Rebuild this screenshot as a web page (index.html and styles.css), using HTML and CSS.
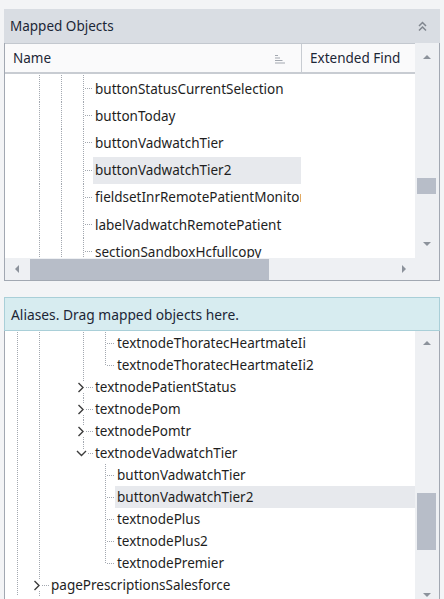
FILE: index.html
```html
<!DOCTYPE html>
<html>
<head>
<meta charset="utf-8">
<link rel="stylesheet" href="styles.css">
</head>
<body>
<div class="panel mapped">
  <div class="panel-header">
    <span>Mapped Objects</span>
    <svg class="collapse" width="9" height="11" viewBox="0 0 9 11"><path d="M1 5 L4.5 1.5 L8 5 M1 9.5 L4.5 6 L8 9.5" fill="none" stroke="#80868f" stroke-width="1.5"/></svg>
  </div>
  <div class="grid-box top-box">
    <div class="main">
      <div class="col-header">
        <div class="col name-col"><span>Name</span>
          <svg width="10" height="10" viewBox="0 0 10 10"><path d="M0 1.5 H3 M0 4 H5 M0 6.5 H7.5 M0 9 H10" stroke="#a3a8b0" stroke-width="1"/></svg>
        </div>
        <div class="col ext-col">Extended Find</div>
      </div>
      <div class="rows top-rows">
        <div class="row"><div class="name-cell"><span class="s"></span><span class="s v"></span><span class="s v"></span><span class="s v h"></span><span class="label">buttonStatusCurrentSelection</span></div></div>
        <div class="row"><div class="name-cell"><span class="s"></span><span class="s v"></span><span class="s v"></span><span class="s v h"></span><span class="label">buttonToday</span></div></div>
        <div class="row"><div class="name-cell"><span class="s"></span><span class="s v"></span><span class="s v"></span><span class="s v h"></span><span class="label">buttonVadwatchTier</span></div></div>
        <div class="row"><div class="name-cell"><span class="s"></span><span class="s v"></span><span class="s v"></span><span class="s v h"></span><span class="label sel">buttonVadwatchTier2</span></div></div>
        <div class="row"><div class="name-cell"><span class="s"></span><span class="s v"></span><span class="s v"></span><span class="s v h"></span><span class="label">fieldsetInrRemotePatientMonitor</span></div></div>
        <div class="row"><div class="name-cell"><span class="s"></span><span class="s v"></span><span class="s v"></span><span class="s v h"></span><span class="label">labelVadwatchRemotePatient</span></div></div>
        <div class="row"><div class="name-cell"><span class="s"></span><span class="s v"></span><span class="s v"></span><span class="s v h"></span><span class="label">sectionSandboxHcfullcopy</span></div></div>
      </div>
    </div>
    <div class="vscroll top-v">
      <div class="sbtn up-btn"><span class="tri-up"></span></div>
      <div class="track"><div class="thumb"></div></div>
      <div class="sbtn down-btn"><span class="tri-down"></span></div>
    </div>
    <div class="hscroll">
      <div class="hbtn"><span class="tri-left"></span></div>
      <div class="htrack"><div class="hthumb"></div></div>
      <div class="hbtn"><span class="tri-right"></span></div>
    </div>
    <div class="corner"></div>
  </div>
</div>

<div class="panel aliases">
  <div class="panel-header">Aliases. Drag mapped objects here.</div>
  <div class="grid-box bottom-box">
    <div class="rows bottom-rows">
      <div class="row"><span class="s v"></span><span class="s v"></span><span class="s"></span><span class="s v"></span><span class="s v h"></span><span class="label">textnodeThoratecHeartmateIi</span></div>
      <div class="row"><span class="s v"></span><span class="s v"></span><span class="s"></span><span class="s v"></span><span class="s half h"></span><span class="label">textnodeThoratecHeartmateIi2</span></div>
      <div class="row"><span class="s v"></span><span class="s v"></span><span class="s"></span><span class="s chev vc"><svg width="8" height="11" viewBox="0 0 8 11"><path d="M1.5 1 L6 5.5 L1.5 10" fill="none" stroke="#3c3c3c" stroke-width="1.4"/></svg><i class="conn"></i></span><span class="label">textnodePatientStatus</span></div>
      <div class="row"><span class="s v"></span><span class="s v"></span><span class="s"></span><span class="s chev vc"><svg width="8" height="11" viewBox="0 0 8 11"><path d="M1.5 1 L6 5.5 L1.5 10" fill="none" stroke="#3c3c3c" stroke-width="1.4"/></svg><i class="conn"></i></span><span class="label">textnodePom</span></div>
      <div class="row"><span class="s v"></span><span class="s v"></span><span class="s"></span><span class="s chev vc"><svg width="8" height="11" viewBox="0 0 8 11"><path d="M1.5 1 L6 5.5 L1.5 10" fill="none" stroke="#3c3c3c" stroke-width="1.4"/></svg><i class="conn"></i></span><span class="label">textnodePomtr</span></div>
      <div class="row"><span class="s v"></span><span class="s v"></span><span class="s"></span><span class="s chev vt down"><svg width="11" height="7" viewBox="0 0 11 7"><path d="M1 1 L5.5 5.5 L10 1" fill="none" stroke="#3c3c3c" stroke-width="1.4"/></svg><i class="conn"></i></span><span class="label">textnodeVadwatchTier</span></div>
      <div class="row"><span class="s v"></span><span class="s v"></span><span class="s"></span><span class="s"></span><span class="s v h"></span><span class="label">buttonVadwatchTier</span></div>
      <div class="row"><span class="s v"></span><span class="s v"></span><span class="s"></span><span class="s"></span><span class="s v h"></span><span class="label sel">buttonVadwatchTier2</span></div>
      <div class="row"><span class="s v"></span><span class="s v"></span><span class="s"></span><span class="s"></span><span class="s v h"></span><span class="label">textnodePlus</span></div>
      <div class="row"><span class="s v"></span><span class="s v"></span><span class="s"></span><span class="s"></span><span class="s v h"></span><span class="label">textnodePlus2</span></div>
      <div class="row"><span class="s v"></span><span class="s v"></span><span class="s"></span><span class="s"></span><span class="s half h"></span><span class="label">textnodePremier</span></div>
      <div class="row"><span class="s v"></span><span class="s chev vc"><svg width="8" height="11" viewBox="0 0 8 11"><path d="M1.5 1 L6 5.5 L1.5 10" fill="none" stroke="#3c3c3c" stroke-width="1.4"/></svg><i class="conn"></i></span><span class="label">pagePrescriptionsSalesforce</span></div>
    </div>
    <div class="vscroll bottom-v">
      <div class="sbtn up-btn"><span class="tri-up"></span></div>
      <div class="track"><div class="thumb"></div></div>
      <div class="sbtn down-btn"><span class="tri-down"></span></div>
    </div>
  </div>
</div>
</body>
</html>
```

FILE: styles.css
```css
* { box-sizing: border-box; }
html, body { margin: 0; padding: 0; }
body {
  width: 444px;
  height: 599px;
  overflow: hidden;
  background: #f3f4f6;
  font-family: "Noto Sans", "Open Sans", sans-serif;
  font-size: 13.5px;
  color: #1e1e1e;
}
.panel { margin: 0 4px; }
.mapped { padding-top: 9px; }
.aliases { margin-top: 16px; }

.panel-header {
  height: 34px;
  display: flex;
  align-items: center;
  justify-content: space-between;
  padding: 0 13px 0 6px;
  font-size: 13.5px;
  color: #1c2636;
}
.mapped .panel-header { background: #d9dde3; }
.aliases .panel-header {
  background: #d7ecf0;
  border: 1px solid #a9cfd8;
  padding-left: 6px;
  font-size: 13.8px;
}
.collapse { display: block; }

.grid-box {
  display: grid;
  grid-template-columns: 410px 24px;
  border: 1px solid #a2a8b2;
  border-top: none;
}
.top-box { grid-template-rows: 215px 22px; }
.bottom-box {
  height: 275px;
  border-bottom: none;
}

.main { display: flex; flex-direction: column; background: #fff; }
.col-header {
  display: flex;
  height: 31px;
  border-top: 1px solid #c3c8cf;
  border-bottom: 2px solid #c8ccd2;
  background: #fafafb;
  color: #1c2636;
  font-size: 13.5px;
}
.col { display: flex; align-items: center; }
.name-col {
  width: 297px;
  padding: 0 16px 0 8px;
  justify-content: space-between;
  border-right: 1px solid #c8ccd2;
}
.name-col svg { margin-top: 1px; }
.ext-col { flex: 1; padding-left: 8px; white-space: nowrap; overflow: hidden; }

.rows { background: #fff; overflow: hidden; }
.top-rows { height: 184px; padding-top: 1px; }
.row { display: flex; align-items: stretch; white-space: nowrap; }
.top-rows .row { height: 27.2px; }
.name-cell { width: 296px; display: flex; overflow: hidden; padding-left: 1px; }
.bottom-rows { padding-top: 1px; }
.bottom-rows .row { height: 22px; padding-left: 1px; }

.s { flex: none; width: 22px; height: 100%; background-repeat: no-repeat; }
.s.v {
  background-image: repeating-linear-gradient(to bottom, #a3a8b0 0 1px, transparent 1px 2px);
  background-position: 11px 0;
  background-size: 1px 100%;
}
.s.v.h, .s.half.h {
  background-image:
    repeating-linear-gradient(to bottom, #a3a8b0 0 1px, transparent 1px 2px),
    repeating-linear-gradient(to right, #a3a8b0 0 1px, transparent 1px 2px);
  background-position: 11px 0, 13px 50%;
  background-size: 1px 100%, 8px 1px;
}
.s.half.h { background-size: 1px 50%, 8px 1px; }

.s.chev { display: flex; align-items: center; padding-left: 5px; }
.s.chev svg { flex: none; display: block; }
.s.chev.down { padding-left: 4px; }
.s.chev.vc {
  background-image:
    repeating-linear-gradient(to bottom, #a3a8b0 0 1px, transparent 1px 2px),
    repeating-linear-gradient(to bottom, #a3a8b0 0 1px, transparent 1px 2px);
  background-position: 11px 0, 11px 100%;
  background-size: 1px 5px, 1px 5px;
}
.s.chev.vt {
  background-image: repeating-linear-gradient(to bottom, #a3a8b0 0 1px, transparent 1px 2px);
  background-position: 11px 0;
  background-size: 1px 7px;
}
.conn {
  flex: 1;
  height: 1px;
  margin: 0 1px 0 1px;
  background: repeating-linear-gradient(to right, #a3a8b0 0 1px, transparent 1px 2px);
}

.label {
  flex: 1;
  display: flex;
  align-items: center;
  margin-left: -1px;
  padding-left: 2px;
  overflow: hidden;
  color: #1e1e1e;
}
.label.sel { background: #e7e9ed; }

.vscroll { display: flex; flex-direction: column; background: #eef0f3; }
.sbtn { display: flex; align-items: center; justify-content: center; flex: none; padding-right: 1px; }
.top-v .sbtn { height: 28px; }
.bottom-v .sbtn { height: 24px; }
.bottom-v .down-btn { height: 22px; }
.track { flex: 1; }
.thumb { background: #b7bdc8; margin: 0 3px 0 2px; }
.top-v .thumb { margin-top: 107px; height: 16px; }
.bottom-v .thumb { margin-top: 138px; height: 57px; }

.tri-up, .tri-down, .tri-left, .tri-right { width: 0; height: 0; display: block; }
.tri-up { border-left: 4px solid transparent; border-right: 4px solid transparent; border-bottom: 4px solid #8c929b; }
.tri-down { border-left: 4px solid transparent; border-right: 4px solid transparent; border-top: 4px solid #8c929b; }
.tri-left { border-top: 4px solid transparent; border-bottom: 4px solid transparent; border-right: 4px solid #8c929b; }
.tri-right { border-top: 4px solid transparent; border-bottom: 4px solid transparent; border-left: 4px solid #8c929b; }

.hscroll { display: flex; background: #eef0f3; }
.hbtn { width: 23px; display: flex; align-items: center; justify-content: center; flex: none; }
.htrack { flex: 1; display: flex; }
.hthumb { width: 239px; margin-left: 2px; background: #b7bdc8; margin-top: 1px; }
.corner { background: #eef0f3; }
```
